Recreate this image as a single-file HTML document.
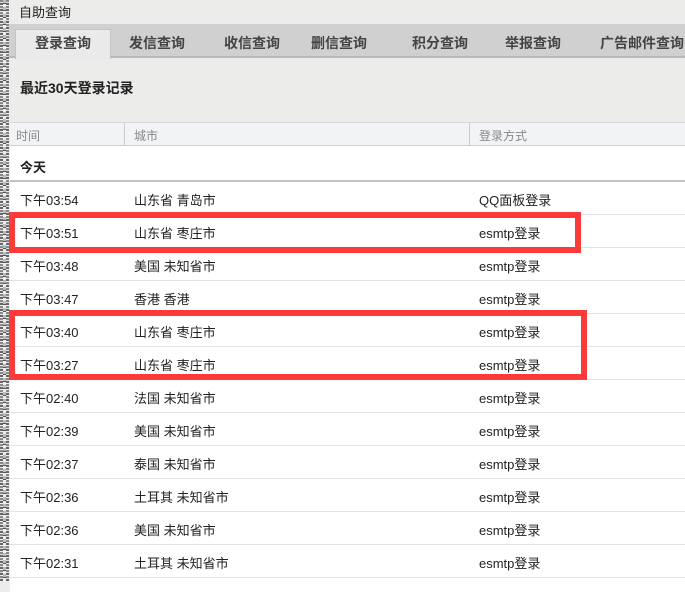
<!DOCTYPE html>
<html><head><meta charset="utf-8"><style>
*{margin:0;padding:0;box-sizing:border-box}
body{width:685px;height:581px;overflow:hidden;background:#ececea;font-family:"Liberation Sans","Noto Sans CJK SC",sans-serif;color:#222;position:relative}
.lb{position:absolute;left:0;top:0;width:9px;height:581px;background:repeating-linear-gradient(0deg,#666 0 2px,#ddd 2px 3px,#888 3px 5px,#eee 5px 6px)}
.lb:after{content:"";position:absolute;left:3px;top:0;width:3px;height:581px;background:repeating-linear-gradient(0deg,#eee 0 3px,#555 3px 4px,#bbb 4px 7px)}
.t{position:absolute;left:19px;top:2px;font-size:13px}
.bar{position:absolute;left:9px;top:24px;width:676px;height:34px;background:#d0d0d0;border-bottom:2px solid #b8b8b8}
.tab{position:absolute;top:9px;font-size:14px;font-weight:bold;color:#444;transform:translateX(-50%);white-space:nowrap}
.act{position:absolute;left:6px;top:5px;width:96px;height:30px;background:#eaeaea;border:1px solid #c4c4c4;border-bottom:none}
.h{position:absolute;left:20px;top:78px;font-size:14px;font-weight:bold}
.tbl{position:absolute;left:10px;top:122px;width:675px;height:470px;background:#fff}
.hd{height:24px;background:#f2f3f5;border-top:1px solid #d6d8dc;border-bottom:1px solid #d0d2d6;position:relative;font-size:12px;color:#888}
.hd span{position:absolute;top:4px}
.vl{position:absolute;top:0;width:1px;height:23px;background:#ccc}
.today{height:36px;border-bottom:2px solid #c4c4c4;font-size:13px;font-weight:bold;padding:11px 0 0 10px}
.r{height:33px;border-bottom:1px solid #e2e3e8;position:relative;font-size:13px;color:#222}
.r span{position:absolute;top:8px}
.box{position:absolute;border:6px solid #fb3a3a}
</style></head><body>
<div class="lb"></div>
<div class="t">自助查询</div>
<div class="bar"><div class="act"></div>
<span class="tab" style="left:54px">登录查询</span>
<span class="tab" style="left:148px">发信查询</span>
<span class="tab" style="left:243px">收信查询</span>
<span class="tab" style="left:330px">删信查询</span>
<span class="tab" style="left:431px">积分查询</span>
<span class="tab" style="left:524px">举报查询</span>
<span class="tab" style="left:633px">广告邮件查询</span>
</div>
<div class="h">最近30天登录记录</div>
<div class="tbl">
<div class="hd"><span style="left:6px">时间</span><div class="vl" style="left:114px"></div><span style="left:124px">城市</span><div class="vl" style="left:459px"></div><span style="left:469px">登录方式</span></div>
<div class="today">今天</div>
<div class="r"><span style="left:10px">下午03:54</span><span style="left:124px">山东省 青岛市</span><span style="left:469px">QQ面板登录</span></div>
<div class="r"><span style="left:10px">下午03:51</span><span style="left:124px">山东省 枣庄市</span><span style="left:469px">esmtp登录</span></div>
<div class="r"><span style="left:10px">下午03:48</span><span style="left:124px">美国 未知省市</span><span style="left:469px">esmtp登录</span></div>
<div class="r"><span style="left:10px">下午03:47</span><span style="left:124px">香港 香港</span><span style="left:469px">esmtp登录</span></div>
<div class="r"><span style="left:10px">下午03:40</span><span style="left:124px">山东省 枣庄市</span><span style="left:469px">esmtp登录</span></div>
<div class="r"><span style="left:10px">下午03:27</span><span style="left:124px">山东省 枣庄市</span><span style="left:469px">esmtp登录</span></div>
<div class="r"><span style="left:10px">下午02:40</span><span style="left:124px">法国 未知省市</span><span style="left:469px">esmtp登录</span></div>
<div class="r"><span style="left:10px">下午02:39</span><span style="left:124px">美国 未知省市</span><span style="left:469px">esmtp登录</span></div>
<div class="r"><span style="left:10px">下午02:37</span><span style="left:124px">泰国 未知省市</span><span style="left:469px">esmtp登录</span></div>
<div class="r"><span style="left:10px">下午02:36</span><span style="left:124px">土耳其 未知省市</span><span style="left:469px">esmtp登录</span></div>
<div class="r"><span style="left:10px">下午02:36</span><span style="left:124px">美国 未知省市</span><span style="left:469px">esmtp登录</span></div>
<div class="r"><span style="left:10px">下午02:31</span><span style="left:124px">土耳其 未知省市</span><span style="left:469px">esmtp登录</span></div>
</div>
<div class="box" style="left:9px;top:212px;width:572px;height:41px"></div>
<div class="box" style="left:9px;top:310px;width:578px;height:70px"></div>
</body></html>
